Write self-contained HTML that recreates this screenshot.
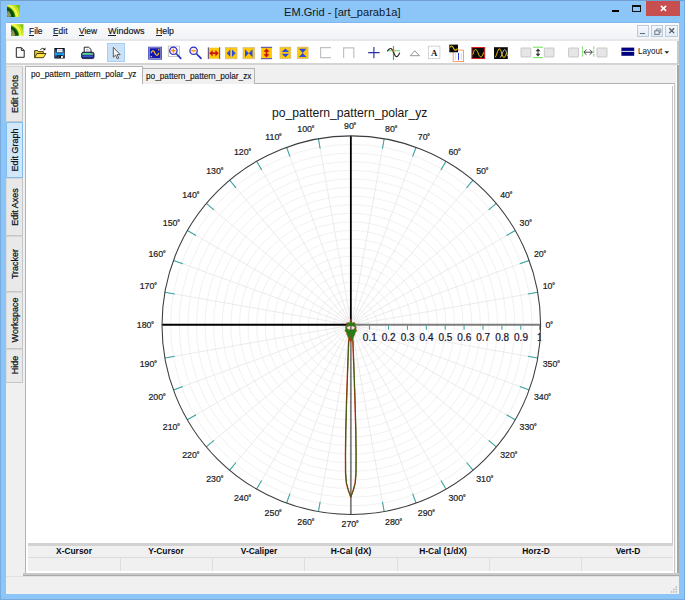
<!DOCTYPE html>
<html><head><meta charset="utf-8"><title>EM.Grid - [art_parab1a]</title>
<style>
html,body{margin:0;padding:0;}
body{width:685px;height:600px;overflow:hidden;background:#8cc6f9;position:relative;font-family:"Liberation Sans", sans-serif;}
div{position:absolute;box-sizing:border-box;}
.t{white-space:pre;line-height:1.2;color:#000;}
svg{position:absolute;overflow:visible;}
u{text-decoration:underline;text-underline-offset:0.6px;text-decoration-thickness:0.9px;}
</style></head><body>
<div  style="left:0px;top:0px;width:685px;height:600px;border:1px solid #79abdc;border-top-color:#6f9fce;"></div>
<div  style="left:5.5px;top:21.8px;width:674px;height:1.4px;background:#7fb6ee;"></div>
<svg style="position:absolute;left:7.3px;top:5px" width="12.8" height="12" viewBox="0 0 12.8 12"><defs><radialGradient id="lg73" gradientUnits="userSpaceOnUse" cx="-3.2" cy="12.4" r="22"><stop offset="0" stop-color="#8c8c3c"/><stop offset="0.25" stop-color="#7c8428"/><stop offset="0.33" stop-color="#4f6a16"/><stop offset="0.36" stop-color="#0a3a0a"/><stop offset="0.47" stop-color="#0c5a0c"/><stop offset="0.515" stop-color="#58a810"/><stop offset="0.55" stop-color="#eef040"/><stop offset="0.635" stop-color="#fafa52"/><stop offset="0.665" stop-color="#a4de18"/><stop offset="0.695" stop-color="#d4ee30"/><stop offset="0.77" stop-color="#98d010"/><stop offset="1" stop-color="#6c980c"/></radialGradient></defs><rect width="12.8" height="12" fill="url(#lg73)"/><path d="M0.7 5.4 L3.2 11.4 M1.9 6.2 L4.3 11.2 M0.4 8 L1.6 11.6" stroke="#e0e4cc" stroke-width="0.55" opacity="0.75"/></svg>
<div class="t" style="left:284px;top:4.9px;font-size:11.8px;transform:scaleX(0.941);transform-origin:0 0;color:#101820;">EM.Grid - [art_parab1a]</div>
<div  style="left:612px;top:9.5px;width:7px;height:2px;background:#000;"></div>
<div  style="left:632px;top:5px;width:8.5px;height:6.5px;border:1px solid #111;border-top-width:2px;"></div>
<div  style="left:646px;top:1px;width:33.5px;height:14.5px;background:#c84f50;"></div>
<svg style="left:659.6px;top:5.4px" width="7" height="7" viewBox="0 0 7 7"><path d="M0.9 0.9 L6.1 5.9 M6.1 0.9 L0.9 5.9" stroke="#fff" stroke-width="1.5" fill="none"/></svg>
<div  style="left:6px;top:23px;width:673px;height:571px;background:#f0f0f0;"></div>
<div  style="left:6px;top:23px;width:673px;height:16px;background:linear-gradient(#fbfcfd,#f1f3f6);"></div>
<div  style="left:6px;top:39px;width:673px;height:2px;background:#e6e7e9;"></div>
<svg style="position:absolute;left:11px;top:24px" width="12.4" height="12" viewBox="0 0 12.8 12"><defs><radialGradient id="lg110" gradientUnits="userSpaceOnUse" cx="-3.2" cy="12.4" r="22"><stop offset="0" stop-color="#8c8c3c"/><stop offset="0.25" stop-color="#7c8428"/><stop offset="0.33" stop-color="#4f6a16"/><stop offset="0.36" stop-color="#0a3a0a"/><stop offset="0.47" stop-color="#0c5a0c"/><stop offset="0.515" stop-color="#58a810"/><stop offset="0.55" stop-color="#eef040"/><stop offset="0.635" stop-color="#fafa52"/><stop offset="0.665" stop-color="#a4de18"/><stop offset="0.695" stop-color="#d4ee30"/><stop offset="0.77" stop-color="#98d010"/><stop offset="1" stop-color="#6c980c"/></radialGradient></defs><rect width="12.8" height="12" fill="url(#lg110)"/><path d="M0.7 5.4 L3.2 11.4 M1.9 6.2 L4.3 11.2 M0.4 8 L1.6 11.6" stroke="#e0e4cc" stroke-width="0.55" opacity="0.75"/></svg>
<div class="t" style="left:28.8px;top:25.2px;font-size:9.5px;transform:scaleX(0.885);transform-origin:0 0;color:#10101c;-webkit-text-stroke:0.15px #10101c;">File</div>
<div  style="left:29.1px;top:34.6px;width:4.6px;height:0.9px;background:#20202c;"></div>
<div class="t" style="left:53px;top:25.2px;font-size:9.5px;transform:scaleX(0.885);transform-origin:0 0;color:#10101c;-webkit-text-stroke:0.15px #10101c;">Edit</div>
<div  style="left:53.3px;top:34.6px;width:5.2px;height:0.9px;background:#20202c;"></div>
<div class="t" style="left:78.6px;top:25.2px;font-size:9.5px;transform:scaleX(0.885);transform-origin:0 0;color:#10101c;-webkit-text-stroke:0.15px #10101c;">View</div>
<div  style="left:78.89999999999999px;top:34.6px;width:5.4px;height:0.9px;background:#20202c;"></div>
<div class="t" style="left:108px;top:25.2px;font-size:9.5px;transform:scaleX(0.95);transform-origin:0 0;color:#10101c;-webkit-text-stroke:0.15px #10101c;">Windows</div>
<div  style="left:108.3px;top:34.6px;width:8.2px;height:0.9px;background:#20202c;"></div>
<div class="t" style="left:155.7px;top:25.2px;font-size:9.5px;transform:scaleX(0.92);transform-origin:0 0;color:#10101c;-webkit-text-stroke:0.15px #10101c;">Help</div>
<div  style="left:156.0px;top:34.6px;width:5.8px;height:0.9px;background:#20202c;"></div>
<div  style="left:636.5px;top:24.5px;width:12.4px;height:12.8px;background:linear-gradient(#f6f9fd,#e2ebf6);border:1px solid #bccada;"></div>
<div  style="left:650.8px;top:24.5px;width:12.4px;height:12.8px;background:linear-gradient(#f6f9fd,#e2ebf6);border:1px solid #bccada;"></div>
<div  style="left:665.2px;top:24.5px;width:12.4px;height:12.8px;background:linear-gradient(#f6f9fd,#e2ebf6);border:1px solid #bccada;"></div>
<div  style="left:640px;top:32.8px;width:4.6px;height:1.4px;background:#5a6878;"></div>
<svg style="left:653.5px;top:27.5px" width="8" height="8" viewBox="0 0 8 8"><path d="M2.4 2.6 V1.0 H6.8 V4.4 H5.2" stroke="#8290a0" stroke-width="0.9" fill="none"/><rect x="0.8" y="2.8" width="4.4" height="3.6" fill="none" stroke="#6a7888" stroke-width="1"/></svg>
<svg style="left:668.9px;top:28.3px" width="5.4" height="5.4" viewBox="0 0 6 6"><path d="M0.3 0.3 L5.7 5.7 M5.7 0.3 L0.3 5.7" stroke="#4a5662" stroke-width="1.4" fill="none"/></svg>
<div  style="left:7px;top:41px;width:670.5px;height:22.5px;background:#fff;"></div>
<div  style="left:6px;top:63.4px;width:672px;height:1.2px;background:#d4d4d4;"></div>
<div  style="left:677.4px;top:41px;width:1.2px;height:23px;background:#c8c8c8;"></div>
<div  style="left:107px;top:43px;width:18px;height:18.8px;background:#cbe2f8;border:1px solid #a6cdf2;"></div>
<svg style="left:0;top:0" width="685" height="70" viewBox="0 0 685 70"><path d="M16.3 47.7 H21.4 L24.2 50.5 V57.3 H16.3 Z" fill="#fff" stroke="#222" stroke-width="1"/><path d="M21.4 47.7 V50.5 H24.2" fill="none" stroke="#222" stroke-width="0.9"/><path d="M34.6 57.6 V50.6 H37.6 L38.6 51.6 H43.3 V53.4" fill="#e8c840" stroke="#3a3000" stroke-width="0.9"/><path d="M34.6 57.7 L36.9 53.5 H46 L43.4 57.7 Z" fill="#ffe24a" stroke="#3a3000" stroke-width="0.9"/><path d="M40.3 49.6 Q42.4 47.2 44.6 49.2" fill="none" stroke="#111" stroke-width="0.9"/><path d="M45.4 47.6 V50.2 H43 Z" fill="#111"/><rect x="54.3" y="48.1" width="10.5" height="10.5" rx="0.6" fill="#0c0c14"/><defs><linearGradient id="sv" x1="0" y1="0" x2="0" y2="1"><stop offset="0" stop-color="#0a2a6a"/><stop offset="0.5" stop-color="#1a90ee"/><stop offset="1" stop-color="#1420a0"/></linearGradient></defs><rect x="54.9" y="49" width="1.9" height="9" fill="url(#sv)"/><rect x="62.4" y="49" width="1.8" height="9" fill="url(#sv)"/><rect x="55.2" y="53.2" width="8.8" height="2" fill="#18a4f6"/><rect x="57" y="48.9" width="5.6" height="3.5" fill="#f2f2f2"/><rect x="58" y="49.6" width="3.6" height="1.6" fill="#d0d4dc"/><rect x="57.3" y="55.6" width="2.3" height="2.6" fill="#4a3a30"/><rect x="61" y="56" width="1.9" height="2.1" fill="#f4f4f0"/><path d="M84.2 52.4 V47.2 H88.6 L91 49.4 V52.4" fill="#fff" stroke="#111" stroke-width="0.9"/><path d="M86 49.4 H88.4 M86 51 H89.4" stroke="#999" stroke-width="0.7"/><rect x="81.6" y="52.2" width="12.4" height="6.4" rx="1.6" fill="#1a2a7a" stroke="#0a0a30" stroke-width="0.8"/><rect x="82.4" y="53" width="10.8" height="1.8" fill="#58d890"/><rect x="82.4" y="55.4" width="10.8" height="1.5" fill="#3a5ad0"/><rect x="91.4" y="53.1" width="1.2" height="1.2" fill="#e05050"/><path d="M113.3 47.3 V57.2 L115.6 55.1 L117.3 58.8 L118.8 58.1 L117.1 54.6 H120.2 Z" fill="#f4f4f4" stroke="#4a4a4a" stroke-width="0.9" stroke-linejoin="round"/><rect x="148.1" y="46.7" width="13.9" height="13" fill="#4650c6"/><rect x="149.3" y="47.9" width="11.5" height="10.6" fill="#1414b2" stroke="#b6b6cc" stroke-width="0.7"/><path d="M151.2 53 C151.8 50.6 153.2 50 154.2 51.8 C155.2 53.6 155.8 55.6 157 55.4 C158 55.2 158.4 54 158.7 52.8" fill="none" stroke="#f2c21c" stroke-width="1.2"/><rect x="158.2" y="48.9" width="1.2" height="1.6" fill="#f2c21c"/><rect x="150.6" y="56" width="1.5" height="1.2" fill="#f2c21c"/><rect x="168.3" y="46.2" width="11.2" height="10.2" fill="#fff" stroke="#b8b8b8" stroke-width="0.8"/><path d="M176.0 53.5 L180.8 58.400000000000006" stroke="#2a2ac8" stroke-width="1.7" stroke-linecap="round"/><path d="M175.8 53.300000000000004 L177.0 54.5" stroke="#30a040" stroke-width="1.4"/><circle cx="173.4" cy="50.7" r="3.7" fill="#fff0de" stroke="#2c2cd0" stroke-width="1.25"/><path d="M171.4 50.7 H175.4 M173.4 48.7 V52.7" stroke="#ff8400" stroke-width="1.3"/><path d="M196.2 53.5 L201.0 58.400000000000006" stroke="#2a2ac8" stroke-width="1.7" stroke-linecap="round"/><path d="M196.0 53.300000000000004 L197.2 54.5" stroke="#30a040" stroke-width="1.4"/><circle cx="193.6" cy="50.7" r="3.7" fill="#fff0de" stroke="#2c2cd0" stroke-width="1.25"/><rect x="191.4" y="49.9" width="4.4" height="1.7" fill="#ffa030"/><rect x="208" y="47.7" width="12" height="11.0" fill="#ffc80a"/><path d="M208.3 47.3 V59.1 M219.7 47.3 V59.1" stroke="#3434c4" stroke-width="0.9"/><path d="M211 53.2 H217" stroke="#cc1212" stroke-width="1.7"/><path d="M209.3 53.2 L212.6 50 V56.4 Z M218.7 53.2 L215.4 50 V56.4 Z" fill="#cc1212"/><rect x="225.3" y="47.6" width="11.699999999999989" height="11.199999999999996" fill="#ffc80a" stroke="#cdb98a" stroke-width="0.7"/><path d="M226.8 53.2 L230.3 49.4 V57 Z M235.6 53.2 L232 49.4 V57 Z" fill="#2c4be0"/><rect x="243" y="47.6" width="11.5" height="11.199999999999996" fill="#ffc80a" stroke="#cdb98a" stroke-width="0.7"/><path d="M245 49.2 V57.2 L248.8 53.2 Z M252.5 49.2 V57.2 L248.8 53.2 Z" fill="#2c4be0"/><rect x="261.1" y="47.2" width="10.799999999999955" height="11.599999999999994" fill="#ffc80a"/><path d="M260.9 47.3 H272.1 M260.9 58.7 H272.1" stroke="#3434c4" stroke-width="0.9"/><path d="M266.5 50 V56" stroke="#cc1212" stroke-width="1.7"/><path d="M266.5 48.4 L263.4 51.7 H269.6 Z M266.5 57.6 L263.4 54.3 H269.6 Z" fill="#cc1212"/><rect x="280" y="47.1" width="10.800000000000011" height="11.5" fill="#ffc80a" stroke="#cdb98a" stroke-width="0.7"/><path d="M285.4 48.5 L281.7 52 H289.1 Z M285.4 57.2 L281.7 53.7 H289.1 Z" fill="#2c4be0"/><rect x="297.4" y="47.1" width="10.700000000000045" height="11.5" fill="#ffc80a" stroke="#cdb98a" stroke-width="0.7"/><path d="M298.9 48.7 H306.5 L302.7 52.9 Z M298.9 57 H306.5 L302.7 52.9 Z" fill="#2c4be0"/><path d="M331 47.7 H320.6 V57.6 H331" fill="none" stroke="#c2c2c2" stroke-width="1.2"/><path d="M343.6 58 V47.8 H353.8 V58" fill="none" stroke="#c2c2c2" stroke-width="1.2"/><path d="M368.2 52.6 H379.6 M373.9 47 V58.2" stroke="#2a2aa4" stroke-width="1.1"/><path d="M387 50.7 H400" stroke="#7fdc9c" stroke-width="1.2"/><path d="M393.5 46 V60" stroke="#2ebf58" stroke-width="1.2"/><path d="M387.4 51.2 C388.4 49.4 390.2 48 391.4 48.8 C393.2 50.2 394.4 55.4 395.8 56.4 C397.2 57.4 398.8 55 399.8 52.6" fill="none" stroke="#222" stroke-width="1.1"/><rect x="392.5" y="49.8" width="1.9" height="1.9" fill="#ff7a10"/><path d="M410.2 55.7 L414.8 50.8 L419.4 55.7 Z" fill="#fff" stroke="#8c8c8c" stroke-width="0.9"/><rect x="428.4" y="46.2" width="11.5" height="12.4" fill="#fff" stroke="#b0b0b0" stroke-width="0.7" stroke-dasharray="2 0.5"/><text x="434.2" y="56.2" font-family="&quot;Liberation Serif&quot;, serif" font-weight="bold" font-size="8.8" text-anchor="middle" fill="#141428">A</text><rect x="453.2" y="50.1" width="10.3" height="11.4" fill="#fff" stroke="#ff9a58" stroke-width="0.95"/><path d="M455.4 53 V60 M461.4 53 V60" stroke="#d8d8e8" stroke-width="0.9"/><path d="M458.5 52.8 V60.2" stroke="#3a3ae0" stroke-width="1"/><rect x="449.3" y="44.6" width="8.7" height="7.7" fill="#0a0a0a"/><path d="M450 47.4 C451 45.4 452.4 45.6 453.4 48 S456.2 51 457.4 48.6" fill="none" stroke="#f2c800" stroke-width="1.1"/><rect x="471.9" y="47.5" width="12.8" height="11" fill="#0a0a0a" stroke="#d42020" stroke-width="1"/><path d="M473 54.6 C474 48.6 476.4 47.8 478 52.8 S481.8 59 483.6 52.4" fill="none" stroke="#f0c400" stroke-width="1.0"/><rect x="494" y="47.2" width="13.8" height="11.8" fill="#0a0a0a"/><path d="M500 57.6 C501.6 57 503 49.6 504.6 49.6 S506.6 54 507.6 56" fill="none" stroke="#c8c8c8" stroke-width="0.9"/><path d="M494.8 57.4 C496.6 56.8 497.6 48.8 499.4 48.8 S502 57.4 503.8 57.4 S505.8 54.6 506.4 53.2" fill="none" stroke="#f0c400" stroke-width="1.0"/><rect x="521" y="48" width="9.799999999999955" height="9" rx="0.5" fill="#e6e6e6" stroke="#bebebe" stroke-width="0.8"/><rect x="544.3" y="48" width="9.700000000000045" height="9" rx="0.5" fill="#e6e6e6" stroke="#bebebe" stroke-width="0.8"/><rect x="568.6" y="48" width="9.899999999999977" height="9" rx="0.5" fill="#e6e6e6" stroke="#bebebe" stroke-width="0.8"/><rect x="597" y="48" width="10" height="9" rx="0.5" fill="#e6e6e6" stroke="#bebebe" stroke-width="0.8"/><path d="M533 47.2 H543 M533 57.6 H543" stroke="#6ee25a" stroke-width="1"/><path d="M538 50 V55" stroke="#333" stroke-width="1"/><path d="M538 48.6 L535.6 51.2 H540.4 Z M538 56.4 L535.6 53.8 H540.4 Z" fill="#333"/><path d="M582.4 46.4 V56.6 M593.8 46.4 V56.6" stroke="#6ee25a" stroke-width="1" stroke-dasharray="3 0.8"/><path d="M584 52.2 H592.2" stroke="#3a3a3a" stroke-width="0.9"/><path d="M586.6 49.6 L583.8 52.2 L586.6 54.8 M589.6 49.6 L592.4 52.2 L589.6 54.8" fill="none" stroke="#3a3a3a" stroke-width="0.9"/><rect x="621.4" y="47.6" width="12.8" height="8.2" fill="#00007e"/><rect x="621.4" y="50.9" width="12.8" height="0.9" fill="#fff"/><path d="M664.4 51.2 H669.2 L666.8 53.8 Z" fill="#222"/></svg>
<div class="t" style="left:637.6px;top:46.3px;font-size:9.2px;transform:scaleX(0.876);transform-origin:0 0;color:#111;">Layout</div>
<div  style="left:675.6px;top:64.6px;width:1.9px;height:508.7px;background:#fff;"></div>
<div  style="left:677.4px;top:64.6px;width:1.5px;height:511.8px;background:#a6a6a6;"></div>
<div  style="left:6px;top:66.3px;width:16.8px;height:56.1px;background:#e9e9e9;border:1px solid #c6c6c6;border-left-color:#dcdcdc;border-top-color:#d6d6d6;"></div>
<div class="t" style="left:14.9px;top:94.05px;font-size:9px;width:0;height:0;"><div class="t" style="left:0;top:0;transform:translate(-50%,-50%) rotate(-90deg);transform-origin:50% 50%;color:#111;-webkit-text-stroke:0.22px #111;">Edit Plots</div></div>
<div  style="left:6px;top:121.8px;width:16.8px;height:56.60000000000001px;background:#d3e7fb;border:1px solid #82bdf0;"></div>
<div class="t" style="left:14.9px;top:150.1px;font-size:9px;width:0;height:0;"><div class="t" style="left:0;top:0;transform:translate(-50%,-50%) rotate(-90deg);transform-origin:50% 50%;color:#111;-webkit-text-stroke:0.22px #111;">Edit Graph</div></div>
<div  style="left:6px;top:178.4px;width:16.8px;height:58.1px;background:#e9e9e9;border:1px solid #c6c6c6;border-left-color:#dcdcdc;border-top-color:#d6d6d6;"></div>
<div class="t" style="left:14.9px;top:207.15px;font-size:9px;width:0;height:0;"><div class="t" style="left:0;top:0;transform:translate(-50%,-50%) rotate(-90deg);transform-origin:50% 50%;color:#111;-webkit-text-stroke:0.22px #111;">Edit Axes</div></div>
<div  style="left:6px;top:235.9px;width:16.8px;height:56.59999999999997px;background:#e9e9e9;border:1px solid #c6c6c6;border-left-color:#dcdcdc;border-top-color:#d6d6d6;"></div>
<div class="t" style="left:14.9px;top:263.9px;font-size:9px;width:0;height:0;"><div class="t" style="left:0;top:0;transform:translate(-50%,-50%) rotate(-90deg);transform-origin:50% 50%;color:#111;-webkit-text-stroke:0.22px #111;">Tracker</div></div>
<div  style="left:6px;top:291.9px;width:16.8px;height:57.40000000000001px;background:#e9e9e9;border:1px solid #c6c6c6;border-left-color:#dcdcdc;border-top-color:#d6d6d6;"></div>
<div class="t" style="left:14.9px;top:320.29999999999995px;font-size:9px;width:0;height:0;"><div class="t" style="left:0;top:0;transform:translate(-50%,-50%) rotate(-90deg);transform-origin:50% 50%;color:#111;-webkit-text-stroke:0.22px #111;">Workspace</div></div>
<div  style="left:6px;top:348.7px;width:16.8px;height:34.1px;background:#e9e9e9;border:1px solid #c6c6c6;border-left-color:#dcdcdc;border-top-color:#d6d6d6;"></div>
<div class="t" style="left:14.9px;top:365.45px;font-size:9px;width:0;height:0;"><div class="t" style="left:0;top:0;transform:translate(-50%,-50%) rotate(-90deg);transform-origin:50% 50%;color:#111;-webkit-text-stroke:0.22px #111;">Hide</div></div>
<div  style="left:24.7px;top:83px;width:650.6999999999999px;height:491.20000000000005px;background:#fff;border:1px solid #b2b2b2;border-right:1.4px solid #c6c6c6;border-bottom:none;"></div>
<div  style="left:142px;top:68.4px;width:112.6px;height:15.4px;background:#f0f0f0;border:1px solid #b4b4b4;border-bottom:none;border-left:none;"></div>
<div class="t" style="left:145.9px;top:70.5px;font-size:9.3px;transform:scaleX(0.887);transform-origin:0 0;color:#111;-webkit-text-stroke:0.12px #111;">po_pattern_pattern_polar_zx</div>
<div  style="left:24.7px;top:66.3px;width:118.2px;height:18px;background:#fff;border:1px solid #b2b2b2;border-bottom:none;"></div>
<div class="t" style="left:31.3px;top:69.1px;font-size:9.3px;transform:scaleX(0.887);transform-origin:0 0;color:#111;-webkit-text-stroke:0.12px #111;">po_pattern_pattern_polar_yz</div>
<div  style="left:672px;top:85.8px;width:1px;height:458px;background:#c4c4c4;"></div>
<div  style="left:23px;top:573.3px;width:655.6px;height:1.5px;background:#cacaca;"></div>
<div  style="left:23px;top:574.8px;width:655.8px;height:1.5px;background:#a8a8a8;"></div>
<div  style="left:28px;top:543.4px;width:645px;height:2.2px;background:#d2d2d2;"></div>
<div  style="left:28px;top:545.6px;width:645px;height:25.4px;background:#f0f0f0;"></div>
<div  style="left:28px;top:557.2px;width:645px;height:1px;background:#dcdcdc;"></div>
<div class="t" style="left:24.150000000000006px;top:545.3px;width:100px;text-align:center;font-size:9.6px;font-weight:bold;transform:scaleX(0.875);color:#0a0a14;">X-Cursor</div>
<div class="t" style="left:116.44999999999999px;top:545.3px;width:100px;text-align:center;font-size:9.6px;font-weight:bold;transform:scaleX(0.875);color:#0a0a14;">Y-Cursor</div>
<div  style="left:119.8px;top:558.2px;width:1px;height:12.6px;background:#dedede;"></div>
<div class="t" style="left:208.75px;top:545.3px;width:100px;text-align:center;font-size:9.6px;font-weight:bold;transform:scaleX(0.875);color:#0a0a14;">V-Caliper</div>
<div  style="left:212.1px;top:558.2px;width:1px;height:12.6px;background:#dedede;"></div>
<div class="t" style="left:301.05px;top:545.3px;width:100px;text-align:center;font-size:9.6px;font-weight:bold;transform:scaleX(0.875);color:#0a0a14;">H-Cal (dX)</div>
<div  style="left:304.4px;top:558.2px;width:1px;height:12.6px;background:#dedede;"></div>
<div class="t" style="left:393.34999999999997px;top:545.3px;width:100px;text-align:center;font-size:9.6px;font-weight:bold;transform:scaleX(0.875);color:#0a0a14;">H-Cal (1/dX)</div>
<div  style="left:396.7px;top:558.2px;width:1px;height:12.6px;background:#dedede;"></div>
<div class="t" style="left:485.65px;top:545.3px;width:100px;text-align:center;font-size:9.6px;font-weight:bold;transform:scaleX(0.875);color:#0a0a14;">Horz-D</div>
<div  style="left:489.0px;top:558.2px;width:1px;height:12.6px;background:#dedede;"></div>
<div class="t" style="left:577.9499999999999px;top:545.3px;width:100px;text-align:center;font-size:9.6px;font-weight:bold;transform:scaleX(0.875);color:#0a0a14;">Vert-D</div>
<div  style="left:581.3px;top:558.2px;width:1px;height:12.6px;background:#dedede;"></div>
<div  style="left:6px;top:576.2px;width:673px;height:1px;background:#e2e2e2;"></div>
<svg style="left:0;top:0" width="685" height="600" viewBox="0 0 685 600"><rect x="675.6" y="586.4" width="1.4" height="1.4" fill="#b4b4b4"/><rect x="675.6" y="588.8" width="1.4" height="1.4" fill="#b4b4b4"/><rect x="675.6" y="591.2" width="1.4" height="1.4" fill="#b4b4b4"/><rect x="673.2" y="588.8" width="1.4" height="1.4" fill="#b4b4b4"/><rect x="673.2" y="591.2" width="1.4" height="1.4" fill="#b4b4b4"/><rect x="670.8" y="591.2" width="1.4" height="1.4" fill="#b4b4b4"/></svg>
<svg style="left:0;top:0;font-family:&quot;Liberation Sans&quot;, sans-serif" width="685" height="600" viewBox="0 0 685 600"><clipPath id="cc"><rect x="26" y="85" width="515.2" height="458"/></clipPath><circle cx="351.3" cy="325.15" r="8.60" fill="none" stroke="#eeeeee" stroke-width="0.8"/><circle cx="351.3" cy="325.15" r="17.21" fill="none" stroke="#eeeeee" stroke-width="0.8"/><circle cx="351.3" cy="325.15" r="25.81" fill="none" stroke="#eeeeee" stroke-width="0.8"/><circle cx="351.3" cy="325.15" r="34.42" fill="none" stroke="#eeeeee" stroke-width="0.8"/><circle cx="351.3" cy="325.15" r="43.02" fill="none" stroke="#eeeeee" stroke-width="0.8"/><circle cx="351.3" cy="325.15" r="51.63" fill="none" stroke="#eeeeee" stroke-width="0.8"/><circle cx="351.3" cy="325.15" r="60.23" fill="none" stroke="#eeeeee" stroke-width="0.8"/><circle cx="351.3" cy="325.15" r="68.84" fill="none" stroke="#eeeeee" stroke-width="0.8"/><circle cx="351.3" cy="325.15" r="77.44" fill="none" stroke="#eeeeee" stroke-width="0.8"/><circle cx="351.3" cy="325.15" r="86.05" fill="none" stroke="#eeeeee" stroke-width="0.8"/><circle cx="351.3" cy="325.15" r="94.65" fill="none" stroke="#eeeeee" stroke-width="0.8"/><circle cx="351.3" cy="325.15" r="103.25" fill="none" stroke="#eeeeee" stroke-width="0.8"/><circle cx="351.3" cy="325.15" r="111.86" fill="none" stroke="#eeeeee" stroke-width="0.8"/><circle cx="351.3" cy="325.15" r="120.46" fill="none" stroke="#eeeeee" stroke-width="0.8"/><circle cx="351.3" cy="325.15" r="129.07" fill="none" stroke="#eeeeee" stroke-width="0.8"/><circle cx="351.3" cy="325.15" r="137.67" fill="none" stroke="#eeeeee" stroke-width="0.8"/><circle cx="351.3" cy="325.15" r="146.28" fill="none" stroke="#eeeeee" stroke-width="0.8"/><circle cx="351.3" cy="325.15" r="154.88" fill="none" stroke="#eeeeee" stroke-width="0.8"/><circle cx="351.3" cy="325.15" r="163.49" fill="none" stroke="#eeeeee" stroke-width="0.8"/><circle cx="351.3" cy="325.15" r="172.09" fill="none" stroke="#eeeeee" stroke-width="0.8"/><circle cx="351.3" cy="325.15" r="180.70" fill="none" stroke="#eeeeee" stroke-width="0.8"/><line x1="351.3" y1="325.15" x2="537.72" y2="292.28" stroke="#e6e6e6" stroke-width="0.8"/><line x1="351.3" y1="325.15" x2="529.18" y2="260.41" stroke="#e6e6e6" stroke-width="0.8"/><line x1="351.3" y1="325.15" x2="515.24" y2="230.50" stroke="#e6e6e6" stroke-width="0.8"/><line x1="351.3" y1="325.15" x2="496.31" y2="203.47" stroke="#e6e6e6" stroke-width="0.8"/><line x1="351.3" y1="325.15" x2="472.98" y2="180.14" stroke="#e6e6e6" stroke-width="0.8"/><line x1="351.3" y1="325.15" x2="445.95" y2="161.21" stroke="#e6e6e6" stroke-width="0.8"/><line x1="351.3" y1="325.15" x2="416.04" y2="147.27" stroke="#e6e6e6" stroke-width="0.8"/><line x1="351.3" y1="325.15" x2="384.17" y2="138.73" stroke="#e6e6e6" stroke-width="0.8"/><line x1="351.3" y1="325.15" x2="318.43" y2="138.73" stroke="#e6e6e6" stroke-width="0.8"/><line x1="351.3" y1="325.15" x2="286.56" y2="147.27" stroke="#e6e6e6" stroke-width="0.8"/><line x1="351.3" y1="325.15" x2="256.65" y2="161.21" stroke="#e6e6e6" stroke-width="0.8"/><line x1="351.3" y1="325.15" x2="229.62" y2="180.14" stroke="#e6e6e6" stroke-width="0.8"/><line x1="351.3" y1="325.15" x2="206.29" y2="203.47" stroke="#e6e6e6" stroke-width="0.8"/><line x1="351.3" y1="325.15" x2="187.36" y2="230.50" stroke="#e6e6e6" stroke-width="0.8"/><line x1="351.3" y1="325.15" x2="173.42" y2="260.41" stroke="#e6e6e6" stroke-width="0.8"/><line x1="351.3" y1="325.15" x2="164.88" y2="292.28" stroke="#e6e6e6" stroke-width="0.8"/><line x1="351.3" y1="325.15" x2="164.88" y2="358.02" stroke="#e6e6e6" stroke-width="0.8"/><line x1="351.3" y1="325.15" x2="173.42" y2="389.89" stroke="#e6e6e6" stroke-width="0.8"/><line x1="351.3" y1="325.15" x2="187.36" y2="419.80" stroke="#e6e6e6" stroke-width="0.8"/><line x1="351.3" y1="325.15" x2="206.29" y2="446.83" stroke="#e6e6e6" stroke-width="0.8"/><line x1="351.3" y1="325.15" x2="229.62" y2="470.16" stroke="#e6e6e6" stroke-width="0.8"/><line x1="351.3" y1="325.15" x2="256.65" y2="489.09" stroke="#e6e6e6" stroke-width="0.8"/><line x1="351.3" y1="325.15" x2="286.56" y2="503.03" stroke="#e6e6e6" stroke-width="0.8"/><line x1="351.3" y1="325.15" x2="318.43" y2="511.57" stroke="#e6e6e6" stroke-width="0.8"/><line x1="351.3" y1="325.15" x2="384.17" y2="511.57" stroke="#e6e6e6" stroke-width="0.8"/><line x1="351.3" y1="325.15" x2="416.04" y2="503.03" stroke="#e6e6e6" stroke-width="0.8"/><line x1="351.3" y1="325.15" x2="445.95" y2="489.09" stroke="#e6e6e6" stroke-width="0.8"/><line x1="351.3" y1="325.15" x2="472.98" y2="470.16" stroke="#e6e6e6" stroke-width="0.8"/><line x1="351.3" y1="325.15" x2="496.31" y2="446.83" stroke="#e6e6e6" stroke-width="0.8"/><line x1="351.3" y1="325.15" x2="515.24" y2="419.80" stroke="#e6e6e6" stroke-width="0.8"/><line x1="351.3" y1="325.15" x2="529.18" y2="389.89" stroke="#e6e6e6" stroke-width="0.8"/><line x1="351.3" y1="325.15" x2="537.72" y2="358.02" stroke="#e6e6e6" stroke-width="0.8"/><line x1="527.88" y1="294.01" x2="537.72" y2="292.28" stroke="#38a2a2" stroke-width="1.05"/><line x1="519.79" y1="263.83" x2="529.18" y2="260.41" stroke="#38a2a2" stroke-width="1.05"/><line x1="506.58" y1="235.50" x2="515.24" y2="230.50" stroke="#38a2a2" stroke-width="1.05"/><line x1="488.65" y1="209.90" x2="496.31" y2="203.47" stroke="#38a2a2" stroke-width="1.05"/><line x1="466.55" y1="187.80" x2="472.98" y2="180.14" stroke="#38a2a2" stroke-width="1.05"/><line x1="440.95" y1="169.87" x2="445.95" y2="161.21" stroke="#38a2a2" stroke-width="1.05"/><line x1="412.62" y1="156.66" x2="416.04" y2="147.27" stroke="#38a2a2" stroke-width="1.05"/><line x1="382.44" y1="148.57" x2="384.17" y2="138.73" stroke="#38a2a2" stroke-width="1.05"/><line x1="320.16" y1="148.57" x2="318.43" y2="138.73" stroke="#38a2a2" stroke-width="1.05"/><line x1="289.98" y1="156.66" x2="286.56" y2="147.27" stroke="#38a2a2" stroke-width="1.05"/><line x1="261.65" y1="169.87" x2="256.65" y2="161.21" stroke="#38a2a2" stroke-width="1.05"/><line x1="236.05" y1="187.80" x2="229.62" y2="180.14" stroke="#38a2a2" stroke-width="1.05"/><line x1="213.95" y1="209.90" x2="206.29" y2="203.47" stroke="#38a2a2" stroke-width="1.05"/><line x1="196.02" y1="235.50" x2="187.36" y2="230.50" stroke="#38a2a2" stroke-width="1.05"/><line x1="182.81" y1="263.83" x2="173.42" y2="260.41" stroke="#38a2a2" stroke-width="1.05"/><line x1="174.72" y1="294.01" x2="164.88" y2="292.28" stroke="#38a2a2" stroke-width="1.05"/><line x1="174.72" y1="356.29" x2="164.88" y2="358.02" stroke="#38a2a2" stroke-width="1.05"/><line x1="182.81" y1="386.47" x2="173.42" y2="389.89" stroke="#38a2a2" stroke-width="1.05"/><line x1="196.02" y1="414.80" x2="187.36" y2="419.80" stroke="#38a2a2" stroke-width="1.05"/><line x1="213.95" y1="440.40" x2="206.29" y2="446.83" stroke="#38a2a2" stroke-width="1.05"/><line x1="236.05" y1="462.50" x2="229.62" y2="470.16" stroke="#38a2a2" stroke-width="1.05"/><line x1="261.65" y1="480.43" x2="256.65" y2="489.09" stroke="#38a2a2" stroke-width="1.05"/><line x1="289.98" y1="493.64" x2="286.56" y2="503.03" stroke="#38a2a2" stroke-width="1.05"/><line x1="320.16" y1="501.73" x2="318.43" y2="511.57" stroke="#38a2a2" stroke-width="1.05"/><line x1="382.44" y1="501.73" x2="384.17" y2="511.57" stroke="#38a2a2" stroke-width="1.05"/><line x1="412.62" y1="493.64" x2="416.04" y2="503.03" stroke="#38a2a2" stroke-width="1.05"/><line x1="440.95" y1="480.43" x2="445.95" y2="489.09" stroke="#38a2a2" stroke-width="1.05"/><line x1="466.55" y1="462.50" x2="472.98" y2="470.16" stroke="#38a2a2" stroke-width="1.05"/><line x1="488.65" y1="440.40" x2="496.31" y2="446.83" stroke="#38a2a2" stroke-width="1.05"/><line x1="506.58" y1="414.80" x2="515.24" y2="419.80" stroke="#38a2a2" stroke-width="1.05"/><line x1="519.79" y1="386.47" x2="529.18" y2="389.89" stroke="#38a2a2" stroke-width="1.05"/><line x1="527.88" y1="356.29" x2="537.72" y2="358.02" stroke="#38a2a2" stroke-width="1.05"/><line x1="350.85" y1="324.75" x2="540.6" y2="324.75" stroke="#7c7c7c" stroke-width="1.85"/><line x1="350.85" y1="325.15" x2="350.85" y2="514.45" stroke="#7e7e7e" stroke-width="1.8"/><line x1="162.0" y1="324.75" x2="350.85" y2="324.75" stroke="#000" stroke-width="1.8"/><line x1="350.85" y1="135.84999999999997" x2="350.85" y2="325.15" stroke="#000" stroke-width="1.8"/><line x1="369.60" y1="325.55" x2="369.60" y2="329.65" stroke="#38a2a2" stroke-width="1.05"/><line x1="388.50" y1="325.55" x2="388.50" y2="329.65" stroke="#38a2a2" stroke-width="1.05"/><line x1="407.40" y1="325.55" x2="407.40" y2="329.65" stroke="#38a2a2" stroke-width="1.05"/><line x1="426.30" y1="325.55" x2="426.30" y2="329.65" stroke="#38a2a2" stroke-width="1.05"/><line x1="445.20" y1="325.55" x2="445.20" y2="329.65" stroke="#38a2a2" stroke-width="1.05"/><line x1="464.10" y1="325.55" x2="464.10" y2="329.65" stroke="#38a2a2" stroke-width="1.05"/><line x1="483.00" y1="325.55" x2="483.00" y2="329.65" stroke="#38a2a2" stroke-width="1.05"/><line x1="501.90" y1="325.55" x2="501.90" y2="329.65" stroke="#38a2a2" stroke-width="1.05"/><line x1="520.80" y1="325.55" x2="520.80" y2="329.65" stroke="#38a2a2" stroke-width="1.05"/><line x1="539.70" y1="325.55" x2="539.70" y2="329.65" stroke="#38a2a2" stroke-width="1.05"/><g clip-path="url(#cc)"><text x="369.80" y="341" font-size="10" text-anchor="middle" fill="#14142c" stroke="#14142c" stroke-width="0.2">0.1</text><text x="388.70" y="341" font-size="10" text-anchor="middle" fill="#14142c" stroke="#14142c" stroke-width="0.2">0.2</text><text x="407.60" y="341" font-size="10" text-anchor="middle" fill="#14142c" stroke="#14142c" stroke-width="0.2">0.3</text><text x="426.50" y="341" font-size="10" text-anchor="middle" fill="#14142c" stroke="#14142c" stroke-width="0.2">0.4</text><text x="445.40" y="341" font-size="10" text-anchor="middle" fill="#14142c" stroke="#14142c" stroke-width="0.2">0.5</text><text x="464.30" y="341" font-size="10" text-anchor="middle" fill="#14142c" stroke="#14142c" stroke-width="0.2">0.6</text><text x="483.20" y="341" font-size="10" text-anchor="middle" fill="#14142c" stroke="#14142c" stroke-width="0.2">0.7</text><text x="502.10" y="341" font-size="10" text-anchor="middle" fill="#14142c" stroke="#14142c" stroke-width="0.2">0.8</text><text x="521.00" y="341" font-size="10" text-anchor="middle" fill="#14142c" stroke="#14142c" stroke-width="0.2">0.9</text><text x="539.90" y="341" font-size="10" text-anchor="middle" fill="#14142c" stroke="#14142c" stroke-width="0.2">1</text></g><circle cx="351.3" cy="325.15" r="189.3" fill="none" stroke="#3c3c3c" stroke-width="1.05"/><path d="M351.30 334.15 L352.80 341.15 L353.70 365.15 L354.90 400.15 L355.70 430.15 L356.00 455.15 L355.90 473.15 L355.10 483.15 L353.30 489.75 L350.70 497.15 L350.70 497.15 L348.10 489.75 L346.30 483.15 L345.50 473.15 L345.40 455.15 L345.70 430.15 L346.50 400.15 L347.70 365.15 L348.60 341.15 L350.10 334.15 Z" fill="none" stroke="#cc2208" stroke-width="1.25" stroke-linejoin="round"/><path d="M351.57 334.15 L353.07 341.15 L353.97 365.15 L355.17 400.15 L355.97 430.15 L356.27 455.15 L356.17 473.15 L355.37 483.15 L353.57 489.75 L350.97 497.15 L350.97 497.15 L348.37 489.75 L346.57 483.15 L345.77 473.15 L345.67 455.15 L345.97 430.15 L346.77 400.15 L347.97 365.15 L348.87 341.15 L350.37 334.15 Z" fill="none" stroke="#1a6c10" stroke-width="1.0" stroke-linejoin="round" opacity="0.8"/><path d="M350.85 319.05 L351.80 322.65 L352.75 322.85 L353.45 322.15 L354.05 322.95 L354.85 322.55 L355.25 323.55 L354.95 324.85 L355.65 325.75 L356.25 327.15 L356.05 329.35 L356.75 330.45 L356.55 331.35 L355.55 331.95 L355.15 333.45 L354.65 334.05 L355.05 334.75 L354.35 335.55 L353.75 336.95 L353.25 338.55 L352.85 340.75 L348.85 340.75 L348.45 338.55 L347.95 336.95 L347.35 335.55 L346.65 334.75 L347.05 334.05 L346.55 333.45 L346.15 331.95 L345.15 331.35 L344.95 330.45 L345.65 329.35 L345.45 327.15 L346.05 325.75 L346.75 324.85 L346.45 323.55 L346.85 322.55 L347.65 322.95 L348.25 322.15 L348.95 322.85 L349.90 322.65 Z M346.65 327.75 L348.35 326.05 L353.35 326.05 L355.05 327.75 L353.55 329.45 L348.15 329.45 Z" fill="#1f8016" stroke="#d8452c" stroke-width="0.5" stroke-linejoin="round" fill-rule="evenodd"/><path d="M350.85 332.65 L351.85 341.65 L349.85 341.65 Z" fill="#c8301c" opacity="0.8"/><text x="545.60" y="328.35" font-size="8.8" text-anchor="start" fill="#1c1c1c" stroke="#1c1c1c" stroke-width="0.2">0<tspan font-size="6.4" dy="-1.0" dx="-0.2" font-weight="bold">°</tspan></text><text x="542.65" y="289.21" font-size="8.8" text-anchor="start" fill="#1c1c1c" stroke="#1c1c1c" stroke-width="0.2">10<tspan font-size="6.4" dy="-1.0" dx="-0.2" font-weight="bold">°</tspan></text><text x="533.88" y="256.50" font-size="8.8" text-anchor="start" fill="#1c1c1c" stroke="#1c1c1c" stroke-width="0.2">20<tspan font-size="6.4" dy="-1.0" dx="-0.2" font-weight="bold">°</tspan></text><text x="519.57" y="225.80" font-size="8.8" text-anchor="start" fill="#1c1c1c" stroke="#1c1c1c" stroke-width="0.2">30<tspan font-size="6.4" dy="-1.0" dx="-0.2" font-weight="bold">°</tspan></text><text x="500.14" y="198.06" font-size="8.8" text-anchor="start" fill="#1c1c1c" stroke="#1c1c1c" stroke-width="0.2">40<tspan font-size="6.4" dy="-1.0" dx="-0.2" font-weight="bold">°</tspan></text><text x="476.19" y="174.11" font-size="8.8" text-anchor="start" fill="#1c1c1c" stroke="#1c1c1c" stroke-width="0.2">50<tspan font-size="6.4" dy="-1.0" dx="-0.2" font-weight="bold">°</tspan></text><text x="448.45" y="154.68" font-size="8.8" text-anchor="start" fill="#1c1c1c" stroke="#1c1c1c" stroke-width="0.2">60<tspan font-size="6.4" dy="-1.0" dx="-0.2" font-weight="bold">°</tspan></text><text x="417.75" y="140.37" font-size="8.8" text-anchor="start" fill="#1c1c1c" stroke="#1c1c1c" stroke-width="0.2">70<tspan font-size="6.4" dy="-1.0" dx="-0.2" font-weight="bold">°</tspan></text><text x="385.04" y="131.60" font-size="8.8" text-anchor="start" fill="#1c1c1c" stroke="#1c1c1c" stroke-width="0.2">80<tspan font-size="6.4" dy="-1.0" dx="-0.2" font-weight="bold">°</tspan></text><text x="350.10" y="128.65" font-size="8.8" text-anchor="middle" fill="#1c1c1c" stroke="#1c1c1c" stroke-width="0.2">90<tspan font-size="6.4" dy="-1.0" dx="-0.2" font-weight="bold">°</tspan></text><text x="314.36" y="131.60" font-size="8.8" text-anchor="end" fill="#1c1c1c" stroke="#1c1c1c" stroke-width="0.2">100<tspan font-size="6.4" dy="-1.0" dx="-0.2" font-weight="bold">°</tspan></text><text x="281.65" y="140.37" font-size="8.8" text-anchor="end" fill="#1c1c1c" stroke="#1c1c1c" stroke-width="0.2">110<tspan font-size="6.4" dy="-1.0" dx="-0.2" font-weight="bold">°</tspan></text><text x="250.95" y="154.68" font-size="8.8" text-anchor="end" fill="#1c1c1c" stroke="#1c1c1c" stroke-width="0.2">120<tspan font-size="6.4" dy="-1.0" dx="-0.2" font-weight="bold">°</tspan></text><text x="223.21" y="174.11" font-size="8.8" text-anchor="end" fill="#1c1c1c" stroke="#1c1c1c" stroke-width="0.2">130<tspan font-size="6.4" dy="-1.0" dx="-0.2" font-weight="bold">°</tspan></text><text x="199.26" y="198.06" font-size="8.8" text-anchor="end" fill="#1c1c1c" stroke="#1c1c1c" stroke-width="0.2">140<tspan font-size="6.4" dy="-1.0" dx="-0.2" font-weight="bold">°</tspan></text><text x="179.83" y="225.80" font-size="8.8" text-anchor="end" fill="#1c1c1c" stroke="#1c1c1c" stroke-width="0.2">150<tspan font-size="6.4" dy="-1.0" dx="-0.2" font-weight="bold">°</tspan></text><text x="165.52" y="256.50" font-size="8.8" text-anchor="end" fill="#1c1c1c" stroke="#1c1c1c" stroke-width="0.2">160<tspan font-size="6.4" dy="-1.0" dx="-0.2" font-weight="bold">°</tspan></text><text x="156.75" y="289.21" font-size="8.8" text-anchor="end" fill="#1c1c1c" stroke="#1c1c1c" stroke-width="0.2">170<tspan font-size="6.4" dy="-1.0" dx="-0.2" font-weight="bold">°</tspan></text><text x="153.80" y="328.35" font-size="8.8" text-anchor="end" fill="#1c1c1c" stroke="#1c1c1c" stroke-width="0.2">180<tspan font-size="6.4" dy="-1.0" dx="-0.2" font-weight="bold">°</tspan></text><text x="156.75" y="366.89" font-size="8.8" text-anchor="end" fill="#1c1c1c" stroke="#1c1c1c" stroke-width="0.2">190<tspan font-size="6.4" dy="-1.0" dx="-0.2" font-weight="bold">°</tspan></text><text x="165.52" y="399.60" font-size="8.8" text-anchor="end" fill="#1c1c1c" stroke="#1c1c1c" stroke-width="0.2">200<tspan font-size="6.4" dy="-1.0" dx="-0.2" font-weight="bold">°</tspan></text><text x="179.83" y="430.30" font-size="8.8" text-anchor="end" fill="#1c1c1c" stroke="#1c1c1c" stroke-width="0.2">210<tspan font-size="6.4" dy="-1.0" dx="-0.2" font-weight="bold">°</tspan></text><text x="199.26" y="458.04" font-size="8.8" text-anchor="end" fill="#1c1c1c" stroke="#1c1c1c" stroke-width="0.2">220<tspan font-size="6.4" dy="-1.0" dx="-0.2" font-weight="bold">°</tspan></text><text x="223.21" y="481.99" font-size="8.8" text-anchor="end" fill="#1c1c1c" stroke="#1c1c1c" stroke-width="0.2">230<tspan font-size="6.4" dy="-1.0" dx="-0.2" font-weight="bold">°</tspan></text><text x="250.95" y="501.42" font-size="8.8" text-anchor="end" fill="#1c1c1c" stroke="#1c1c1c" stroke-width="0.2">240<tspan font-size="6.4" dy="-1.0" dx="-0.2" font-weight="bold">°</tspan></text><text x="281.65" y="515.73" font-size="8.8" text-anchor="end" fill="#1c1c1c" stroke="#1c1c1c" stroke-width="0.2">250<tspan font-size="6.4" dy="-1.0" dx="-0.2" font-weight="bold">°</tspan></text><text x="314.36" y="524.50" font-size="8.8" text-anchor="end" fill="#1c1c1c" stroke="#1c1c1c" stroke-width="0.2">260<tspan font-size="6.4" dy="-1.0" dx="-0.2" font-weight="bold">°</tspan></text><text x="350.10" y="527.45" font-size="8.8" text-anchor="middle" fill="#1c1c1c" stroke="#1c1c1c" stroke-width="0.2">270<tspan font-size="6.4" dy="-1.0" dx="-0.2" font-weight="bold">°</tspan></text><text x="385.04" y="524.50" font-size="8.8" text-anchor="start" fill="#1c1c1c" stroke="#1c1c1c" stroke-width="0.2">280<tspan font-size="6.4" dy="-1.0" dx="-0.2" font-weight="bold">°</tspan></text><text x="417.75" y="515.73" font-size="8.8" text-anchor="start" fill="#1c1c1c" stroke="#1c1c1c" stroke-width="0.2">290<tspan font-size="6.4" dy="-1.0" dx="-0.2" font-weight="bold">°</tspan></text><text x="448.45" y="501.42" font-size="8.8" text-anchor="start" fill="#1c1c1c" stroke="#1c1c1c" stroke-width="0.2">300<tspan font-size="6.4" dy="-1.0" dx="-0.2" font-weight="bold">°</tspan></text><text x="476.19" y="481.99" font-size="8.8" text-anchor="start" fill="#1c1c1c" stroke="#1c1c1c" stroke-width="0.2">310<tspan font-size="6.4" dy="-1.0" dx="-0.2" font-weight="bold">°</tspan></text><text x="500.14" y="458.04" font-size="8.8" text-anchor="start" fill="#1c1c1c" stroke="#1c1c1c" stroke-width="0.2">320<tspan font-size="6.4" dy="-1.0" dx="-0.2" font-weight="bold">°</tspan></text><text x="519.57" y="430.30" font-size="8.8" text-anchor="start" fill="#1c1c1c" stroke="#1c1c1c" stroke-width="0.2">330<tspan font-size="6.4" dy="-1.0" dx="-0.2" font-weight="bold">°</tspan></text><text x="533.88" y="399.60" font-size="8.8" text-anchor="start" fill="#1c1c1c" stroke="#1c1c1c" stroke-width="0.2">340<tspan font-size="6.4" dy="-1.0" dx="-0.2" font-weight="bold">°</tspan></text><text x="542.65" y="366.89" font-size="8.8" text-anchor="start" fill="#1c1c1c" stroke="#1c1c1c" stroke-width="0.2">350<tspan font-size="6.4" dy="-1.0" dx="-0.2" font-weight="bold">°</tspan></text><text x="349.7" y="116.7" font-size="12.15" text-anchor="middle" fill="#161616">po_pattern_pattern_polar_yz</text></svg>
</body></html>
